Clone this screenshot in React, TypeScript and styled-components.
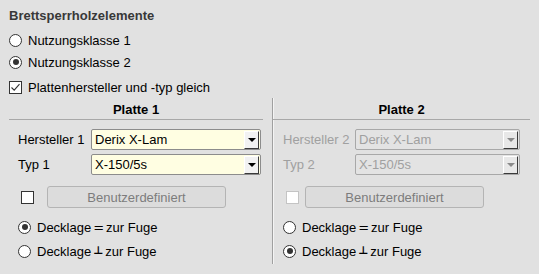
import React from 'react';
import styled, { createGlobalStyle } from 'styled-components';

const GlobalStyle = createGlobalStyle`
  html, body {
    margin: 0;
    padding: 0;
    background: #e1e1e1;
  }
  body {
    font-family: "Liberation Sans", Arial, sans-serif;
    font-size: 13px;
    color: #000;
  }
`;

const Page = styled.div`
  width: 539px;
  height: 274px;
  box-sizing: border-box;
  padding: 6px 9px 0 9px;
  background: #e1e1e1;
  overflow: hidden;
`;

const Title = styled.div`
  height: 20px;
  line-height: 20px;
  font-weight: bold;
  color: #383838;
`;

const OptionRow = styled.label<{ $top?: number }>`
  display: flex;
  align-items: center;
  gap: 6px;
  height: 22px;
  margin-top: ${(p) => p.$top ?? 0}px;
  white-space: nowrap;
`;

const RadioDot = styled.span<{ $checked?: boolean }>`
  position: relative;
  flex: none;
  width: 13px;
  height: 13px;
  box-sizing: border-box;
  border: 1px solid #333;
  border-radius: 50%;
  background: #fff;

  &::after {
    content: '';
    display: ${(p) => (p.$checked ? 'block' : 'none')};
    position: absolute;
    left: 2.5px;
    top: 2.5px;
    width: 6px;
    height: 6px;
    border-radius: 50%;
    background: #333;
  }
`;

const CheckBox = styled.span<{ $disabled?: boolean }>`
  display: flex;
  align-items: center;
  justify-content: center;
  flex: none;
  width: 13px;
  height: 13px;
  box-sizing: border-box;
  border: 1px solid ${(p) => (p.$disabled ? '#c4c4c4' : '#333')};
  background: #fff;
`;

const Columns = styled.div`
  display: flex;
  height: 166px;
`;

const Column = styled.div<{ $width: number }>`
  width: ${(p) => p.$width}px;
  flex: none;
`;

const Divider = styled.div`
  flex: none;
  width: 1px;
  margin-left: 9px;
  background: #a0a0a0;
  box-shadow: 1px 0 0 #f4f4f4;
`;

const Header = styled.div`
  margin-top: 3px;
  height: 18px;
  line-height: 18px;
  text-align: center;
  font-weight: bold;
  border-bottom: 1px solid #a8a8a8;
`;

const Body = styled.div<{ $pad: number }>`
  padding-left: ${(p) => p.$pad}px;
`;

const FieldRow = styled.div<{ $top: number; $disabled?: boolean }>`
  display: flex;
  align-items: center;
  margin-top: ${(p) => p.$top}px;
  height: 21px;
  color: ${(p) => (p.$disabled ? '#a0a0a0' : '#000')};
`;

const FieldLabel = styled.span<{ $width: number }>`
  width: ${(p) => p.$width}px;
  flex: none;
  white-space: nowrap;
`;

const Combo = styled.div<{ $width: number; $disabled?: boolean }>`
  display: flex;
  align-items: stretch;
  width: ${(p) => p.$width}px;
  height: 21px;
  box-sizing: border-box;
  border: 1px solid ${(p) => (p.$disabled ? '#a8a8a8' : '#8c8c8c')};
  border-radius: 2px;
  background: ${(p) => (p.$disabled ? '#e3e3e3' : '#fffee2')};
  color: ${(p) => (p.$disabled ? '#a0a0a0' : '#000')};
`;

const ComboText = styled.span`
  flex: 1;
  padding-left: 3px;
  line-height: 19px;
  white-space: nowrap;
  overflow: hidden;
`;

const ComboArrow = styled.span<{ $disabled?: boolean }>`
  display: flex;
  align-items: center;
  justify-content: center;
  width: 15px;
  flex: none;
  box-sizing: border-box;
  margin: 1px 1px 0 0;
  background: ${(p) => (p.$disabled ? '#e8e8e8' : '#f2f2f2')};
  border-top: 1px solid #fff;
  border-left: 1px solid #fff;
  border-right: 1px solid #3a3a3a;
  border-bottom: 1px solid #3a3a3a;

  &::after {
    content: '';
    width: 0;
    height: 0;
    border-left: 4px solid transparent;
    border-right: 4px solid transparent;
    border-top: 4px solid ${(p) => (p.$disabled ? '#8a8a8a' : '#000')};
  }
`;

const CustomRow = styled.div<{ $gap: number }>`
  display: flex;
  align-items: center;
  gap: ${(p) => p.$gap}px;
  margin-top: 11px;
  height: 22px;
  padding-left: 3px;
`;

const CustomButton = styled.button`
  width: 179px;
  height: 22px;
  padding: 0;
  border: 1px solid #b4b4b4;
  border-radius: 3px;
  background: #dcdcdc;
  color: #7c7c7c;
  font-family: "Liberation Sans", Arial, sans-serif;
  font-size: 13px;
`;

const Sym = styled.span<{ $raised?: boolean }>`
  display: inline-block;
  font-family: "DejaVu Sans", sans-serif;
  font-size: ${(p) => (p.$raised ? '11px' : '13px')};
  font-weight: ${(p) => (p.$raised ? 'bold' : 'normal')};
  transform: ${(p) => (p.$raised ? 'translateY(-2px)' : 'none')};
  margin: 0 2px;
`;

const Check = () => (
  <svg width="11" height="11" viewBox="0 0 11 11">
    <path d="M1.5 5.5 L4.2 8.2 L9.5 2.2" fill="none" stroke="#333" strokeWidth="1.1" />
  </svg>
);

type Plate = {
  nr: number;
  width: number;
  pad: number;
  labelWidth: number;
  comboWidth: number;
  gap: number;
  disabled: boolean;
  parallel: boolean;
};

const plates: Plate[] = [
  { nr: 1, width: 254, pad: 9, labelWidth: 73, comboWidth: 170, gap: 13, disabled: false, parallel: true },
  { nr: 2, width: 257, pad: 10, labelWidth: 72, comboWidth: 165, gap: 6, disabled: true, parallel: false },
];

const PlateColumn = ({ p }: { p: Plate }) => (
  <Column $width={p.width}>
    <Header>Platte {p.nr}</Header>
    <Body $pad={p.pad}>
      <FieldRow $top={9} $disabled={p.disabled}>
        <FieldLabel $width={p.labelWidth}>Hersteller {p.nr}</FieldLabel>
        <Combo $width={p.comboWidth} $disabled={p.disabled}>
          <ComboText>Derix X-Lam</ComboText>
          <ComboArrow $disabled={p.disabled} />
        </Combo>
      </FieldRow>
      <FieldRow $top={4} $disabled={p.disabled}>
        <FieldLabel $width={p.labelWidth}>Typ {p.nr}</FieldLabel>
        <Combo $width={p.comboWidth} $disabled={p.disabled}>
          <ComboText>X-150/5s</ComboText>
          <ComboArrow $disabled={p.disabled} />
        </Combo>
      </FieldRow>
      <CustomRow $gap={p.gap}>
        <CheckBox $disabled={p.disabled} />
        <CustomButton disabled>Benutzerdefiniert</CustomButton>
      </CustomRow>
      <OptionRow $top={8}>
        <RadioDot $checked={p.parallel} />
        <span>
          Decklage<Sym>=</Sym>zur Fuge
        </span>
      </OptionRow>
      <OptionRow $top={2}>
        <RadioDot $checked={!p.parallel} />
        <span>
          Decklage<Sym $raised>⊥</Sym>zur Fuge
        </span>
      </OptionRow>
    </Body>
  </Column>
);

const App = () => (
  <>
    <GlobalStyle />
    <Page>
      <Title>Brettsperrholzelemente</Title>
      <OptionRow $top={3}>
        <RadioDot />
        <span>Nutzungsklasse 1</span>
      </OptionRow>
      <OptionRow>
        <RadioDot $checked />
        <span>Nutzungsklasse 2</span>
      </OptionRow>
      <OptionRow $top={3}>
        <CheckBox>
          <Check />
        </CheckBox>
        <span>Plattenhersteller und -typ gleich</span>
      </OptionRow>
      <Columns>
        <PlateColumn p={plates[0]} />
        <Divider />
        <PlateColumn p={plates[1]} />
      </Columns>
    </Page>
  </>
);

export default App;
